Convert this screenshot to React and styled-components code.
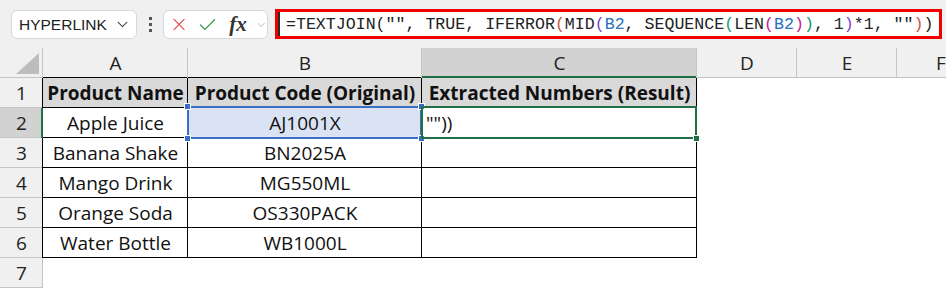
import styled, { createGlobalStyle } from "styled-components";
import { ChevronDown, X, Check } from "lucide-react";

const GlobalStyle = createGlobalStyle`
  html, body {
    margin: 0;
    padding: 0;
    background: #ffffff;
    overflow: hidden;
  }
`;

const Page = styled.div`
  width: 946px;
  height: 289px;
  overflow: hidden;
  background: #ffffff;
`;

const TopBar = styled.div`
  height: 48px;
  box-sizing: border-box;
  display: flex;
  align-items: flex-start;
  padding: 10px 4px 0 11px;
  background: #f0f0f0;
`;

const NameBox = styled.div`
  width: 126px;
  height: 29px;
  box-sizing: border-box;
  display: flex;
  align-items: center;
  justify-content: space-between;
  padding: 0 5px 0 7px;
  background: #ffffff;
  border: 1px solid #d8d8d8;
  border-radius: 6px;
  font-family: "Liberation Sans", Arial, sans-serif;
  font-size: 15.5px;
  color: #222;
`;

const Dots = styled.div`
  width: 4px;
  height: 29px;
  margin: 0 11px;
  display: flex;
  flex-direction: column;
  align-items: center;
  justify-content: center;
  gap: 3px;

  span {
    width: 3px;
    height: 3px;
    background: #555;
  }
`;

const IconsBox = styled.div`
  width: 105px;
  height: 29px;
  box-sizing: border-box;
  display: flex;
  align-items: center;
  padding-left: 5px;
  gap: 8px;
  background: #ffffff;
  border: 1px solid #d8d8d8;
  border-radius: 6px;
`;

const Fx = styled.span`
  font-family: "Liberation Serif", "Times New Roman", serif;
  font-style: italic;
  font-weight: bold;
  font-size: 21px;
  color: #333;
  margin-left: 3px;
  margin-right: -6px;
`;

const FormulaBox = styled.div`
  flex: 1;
  height: 30px;
  margin: -1px 0 0 7px;
  box-sizing: border-box;
  border: 3px solid #f00000;
  background: #ffffff;
  display: flex;
`;

const FormulaText = styled.div`
  flex: 1;
  border-left: 2px solid #2a2a2a;
  padding-left: 6px;
  display: flex;
  align-items: center;
  font-family: "Liberation Mono", "Courier New", monospace;
  font-size: 16.6px;
  color: #222;
  white-space: pre;
`;

const Tok = styled.span`
  color: ${(p) => p.$c};
`;

const Grid = styled.div`
  display: grid;
  grid-template-columns: 43px 145px 234px 275px 100px 100px 88px;
  grid-auto-rows: 30px;
  font-family: "Open Sans", Arial, sans-serif;
  font-size: 19px;
`;

const Cell = styled.div`
  position: relative;
  box-sizing: border-box;
  display: flex;
  align-items: center;
  justify-content: ${(p) => p.$align || "center"};
  padding: ${(p) => (p.$align === "flex-start" ? "0 0 0 4px" : "0")};
  background: ${(p) => p.$bg || "#ffffff"};
  color: ${(p) => p.$color || "#111"};
  font-weight: ${(p) => (p.$bold ? 700 : 400)};
  white-space: nowrap;
  box-shadow: inset -${(p) => p.$rw ?? 1}px 0 0 ${(p) => p.$rc || "transparent"},
    inset 0 -${(p) => p.$bw ?? 1}px 0 ${(p) => p.$bc || "transparent"};
`;

const Corner = styled(Cell)`
  align-items: flex-end;
  justify-content: flex-end;
  padding: 0 4px 4px 0;
`;

const Selection = styled.div`
  position: absolute;
  left: -1px;
  top: -2px;
  right: 0;
  bottom: -1px;
  border: 2px solid ${(p) => p.$c};
  pointer-events: none;
  z-index: ${(p) => p.$z};
`;

const Handle = styled.span`
  position: absolute;
  width: 5px;
  height: 5px;
  background: ${(p) => p.$c};
  outline: 1px solid #ffffff;
  ${(p) => (p.$top ? "top: -4px;" : "bottom: -4px;")}
  ${(p) => (p.$left ? "left: -4px;" : "right: -4px;")}
`;

const HEAD_BG = "#f0f0f0";
const HEAD_SEL = "#d2d2d2";
const HEAD_LINE = "#c4c4c4";
const GREEN = "#1f7145";
const BLUE = "#3b6fc4";

const rows = [
  ["Product Name", "Product Code (Original)", "Extracted Numbers (Result)"],
  ["Apple Juice", "AJ1001X", ""],
  ["Banana Shake", "BN2025A", ""],
  ["Mango Drink", "MG550ML", ""],
  ["Orange Soda", "OS330PACK", ""],
  ["Water Bottle", "WB1000L", ""],
];

const cols = ["A", "B", "C", "D", "E", "F"];

export default function App() {
  return (
    <Page>
      <GlobalStyle />
      <TopBar>
        <NameBox>
          HYPERLINK
          <ChevronDown size={17} strokeWidth={1.6} color="#444" />
        </NameBox>
        <Dots>
          <span />
          <span />
          <span />
        </Dots>
        <IconsBox>
          <X size={23} strokeWidth={1.4} color="#e5484d" />
          <Check size={24} strokeWidth={1.5} color="#3a9b4c" />
          <Fx>fx</Fx>
          <ChevronDown size={14} strokeWidth={1.4} color="#9a9a9a" style={{ marginLeft: 6 }} />
        </IconsBox>
        <FormulaBox>
          <FormulaText>
            {'=TEXTJOIN("", TRUE, IFERROR'}
            <Tok $c="#c9543f">(</Tok>
            MID
            <Tok $c="#7d45c4">(</Tok>
            <Tok $c="#2a6fbf">B2</Tok>
            {", SEQUENCE"}
            <Tok $c="#119a6c">(</Tok>
            LEN
            <Tok $c="#c4228c">(</Tok>
            <Tok $c="#2a6fbf">B2</Tok>
            <Tok $c="#c4228c">)</Tok>
            <Tok $c="#119a6c">)</Tok>
            {", 1"}
            <Tok $c="#7d45c4">)</Tok>
            {'*1, ""'}
            <Tok $c="#c9543f">)</Tok>
            )
          </FormulaText>
        </FormulaBox>
      </TopBar>

      <Grid>
        <Corner $bg={HEAD_BG} $rc={HEAD_LINE} $bc={HEAD_LINE}>
          <svg width="23" height="21" viewBox="0 0 23 21">
            <polygon points="23,0 23,21 0,21" fill="#bdbdbd" />
          </svg>
        </Corner>
        {cols.map((c, i) => (
          <Cell
            key={c}
            $bg={c === "C" ? HEAD_SEL : HEAD_BG}
            $color="#222"
            $rc={HEAD_LINE}
            $bc={c === "C" ? GREEN : i < 3 ? "#000" : HEAD_LINE}
            $bw={c === "C" ? 2 : 1}
          >
            {c}
          </Cell>
        ))}

        {rows.map((r, ri) => {
          const n = ri + 1;
          const head = ri === 0;
          return [
            <Cell
              key={`h${n}`}
              $bg={n === 2 ? HEAD_SEL : HEAD_BG}
              $color="#222"
              $rc={n === 2 ? GREEN : "#000"}
              $rw={n === 2 ? 2 : 1}
              $bc={HEAD_LINE}
            >
              {n}
            </Cell>,
            ...r.map((v, ci) => (
              <Cell
                key={`${n}${ci}`}
                $bg={head ? "#d9d9d9" : n === 2 && ci === 1 ? "#dae3f3" : "#ffffff"}
                $bold={head}
                $rc="#000"
                $bc="#000"
                $align={n === 2 && ci === 2 ? "flex-start" : "center"}
              >
                {n === 2 && ci === 2 ? '""))' : v}
                {n === 2 && ci === 1 && (
                  <Selection $c={BLUE} $z={2}>
                    <Handle $c={BLUE} $top $left />
                    <Handle $c={BLUE} $top />
                    <Handle $c={BLUE} $left />
                    <Handle $c={BLUE} />
                  </Selection>
                )}
                {n === 2 && ci === 2 && (
                  <Selection $c={GREEN} $z={3}>
                    <Handle $c={GREEN} />
                  </Selection>
                )}
              </Cell>
            )),
            <Cell key={`d${n}`} />,
            <Cell key={`e${n}`} />,
            <Cell key={`f${n}`} />,
          ];
        })}

        <Cell $bg={HEAD_BG} $color="#222" $rc={HEAD_LINE} $bc={HEAD_LINE}>
          7
        </Cell>
      </Grid>
    </Page>
  );
}
